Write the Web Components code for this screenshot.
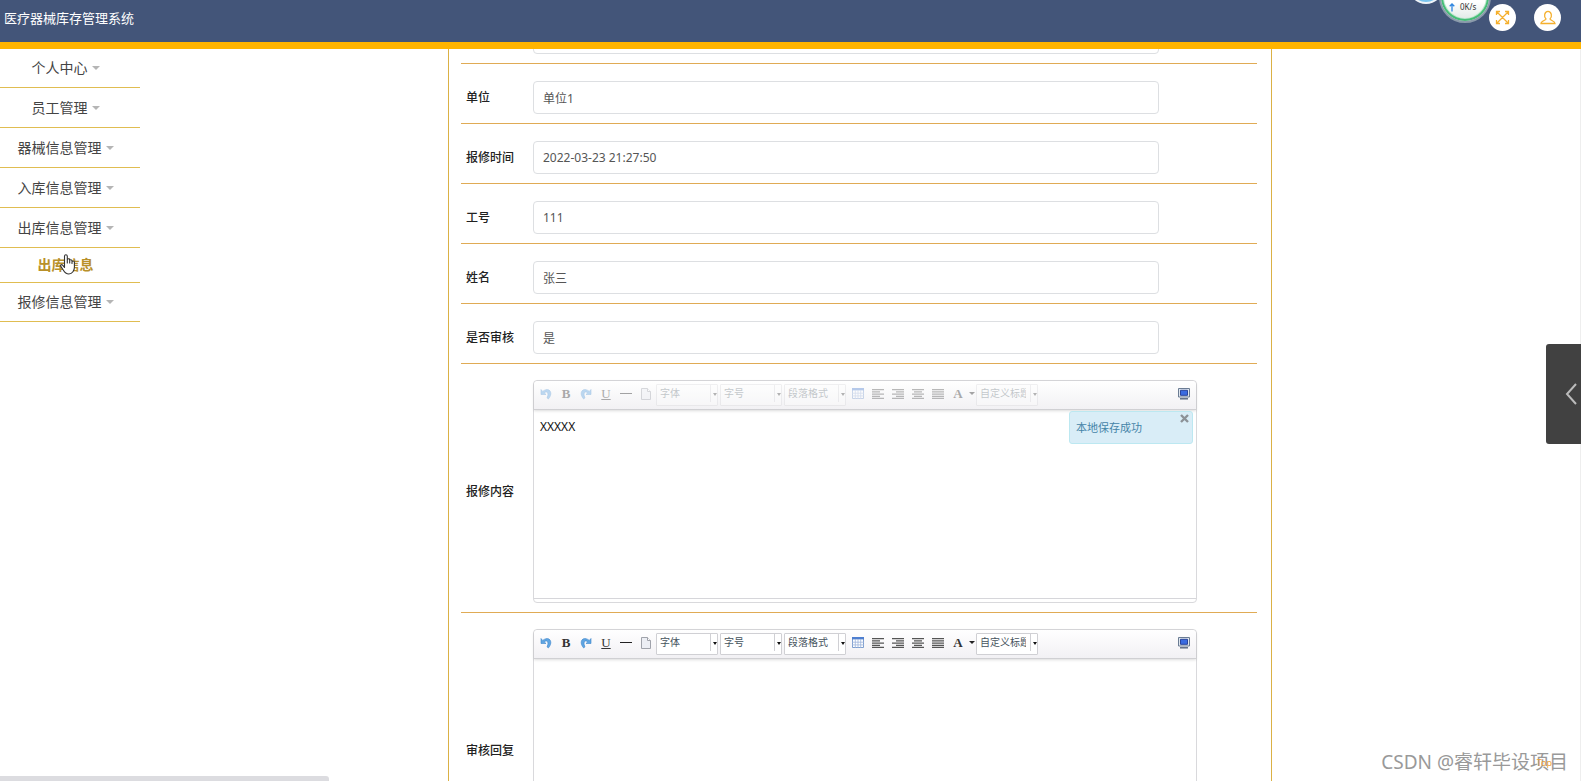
<!DOCTYPE html>
<html lang="zh-CN">
<head>
<meta charset="utf-8">
<title>医疗器械库存管理系统</title>
<style>
html, body { height: 100%; }
body { margin: 0; background: #fff; color: #333; font: 12px/18px "Noto Sans", "Noto Sans CJK SC", sans-serif; }
</style>
</head>
<body>
<inventory-app></inventory-app>
<script>
const define = (name, html, setup) => {
  const tpl = document.createElement('template');
  tpl.innerHTML = '<style>*{box-sizing:border-box}button{border:0;padding:0;background:none;font:inherit;color:inherit;cursor:pointer}</style>' + html;
  customElements.define(name, class extends HTMLElement {
    constructor() {
      super();
      this.attachShadow({ mode: 'open' }).append(tpl.content.cloneNode(true));
    }
    connectedCallback() { if (setup) setup(this, this.shadowRoot); }
  });
};

define('app-header', `
<style>
:host { display: flex; align-items: flex-start; justify-content: space-between; position: relative; height: 49px; flex: none;
  background: #435579; border-bottom: 7px solid #ffb400; overflow: hidden; color: #fff; }
h1 { margin: 0; padding-left: 4px; font-size: 13px; line-height: 36px; font-weight: 400; }
.actions { display: flex; gap: 18px; padding: 4px 20px 0 0; }
.actions button { width: 27px; height: 27px; border-radius: 50%; background: #fff; display: grid; place-items: center; }
svg { display: block; fill: none; stroke: #f5b02e; stroke-width: 1.3; }
.mini { position: absolute; right: 138px; top: -28px; width: 34px; height: 32px; border-radius: 50%; background: #79c4ee; border: 2px solid #eef3f8; }
.speed { position: absolute; right: 90px; top: -29px; width: 52px; height: 52px; border-radius: 50%; border: 2px solid #8b9bab;
  background: linear-gradient(#fff 60%, #dfe8e4); box-shadow: inset 0 0 0 2px #46bd77, inset 0 0 0 3px #b9e6ca; color: #333;
  font-size: 8px; line-height: 12px; padding: 28px 0 0 8px; display: flex; gap: 5px; align-items: flex-start; }
.speed svg { stroke: #2f86e0; margin-top: 2px; }
</style>
<h1>医疗器械库存管理系统</h1>
<div class="mini"></div>
<div class="speed"><svg width="6" height="9" viewBox="0 0 6 9"><path d="M3 8.500V1M.7 3.300 3 1l2.300 2.300"/></svg>0K/s</div>
<div class="actions">
<button aria-label="全屏"><svg width="15" height="15" viewBox="0 0 15 15"><path d="M1.500 5V1.500H5M10 1.500h3.500V5M13.500 10v3.500H10M5 13.500H1.500V10M2 2l11 11M13 2 2 13"/></svg></button>
<button aria-label="用户"><svg width="16" height="16" viewBox="0 0 16 16"><path d="M6 9C3.600 7 4.300 1.300 8 1.300S12.400 7 10 9c0 1.600 5 1.600 5 4.500H1C1 10.600 6 10.600 6 9Z"/></svg></button>
</div>`);

define('nav-item', `
<style>
:host { display: block; height: 40px; border-bottom: 1px solid #e0bd51; padding-right: 9px; font-size: 14px; color: #444; }
:host([sub]) { height: 35px; color: #b8902a; font-weight: 700; }
:host([last]) { height: 39px; }
a { display: flex; height: 100%; align-items: center; justify-content: center; gap: 4px; color: inherit; text-decoration: none; line-height: 20px; }
i { border: 4px solid transparent; border-top-color: #b5b5b5; border-bottom: 0; }
:host([sub]) i { display: none; }
</style>
<a href="#"><slot></slot><i></i></a>`);

define('side-nav', `
<style>
:host { display: block; width: 140px; flex: none; position: relative; }
nav-item:first-child { height: 39px; }
svg { position: absolute; left: 60px; top: 205px; }
</style>
<nav>
<nav-item>个人中心</nav-item>
<nav-item>员工管理</nav-item>
<nav-item>器械信息管理</nav-item>
<nav-item>入库信息管理</nav-item>
<nav-item>出库信息管理</nav-item>
<nav-item sub>出库信息</nav-item>
<nav-item last>报修信息管理</nav-item>
</nav>
<svg width="16" height="21" viewBox="0 0 16 21" fill="#fff" stroke="#333" stroke-width="1.100" stroke-linejoin="round"><path d="M4.500 13.500V2.300c0-2 2.800-2 2.800 0V9 5.800c0-1.400 2.400-1.400 2.400 0V9 6.700c0-1.400 2.300-1.300 2.300 0v2.800-1.600c0-1.300 2.400-1.200 2.400.2v5.200c0 3-2 6.700-5.500 6.700-3.200 0-4.400-1.700-5.500-3.700L.8 12.400c-.7-1.400.8-2.300 1.800-1.200Z"/></svg>`);

const rowStyle = `
:host { display: grid; grid-template-columns: 72px 1fr; align-items: center; border-bottom: 1px solid #e0ab55; }
label { padding-left: 5px; font-weight: 500; color: #222; }`;

define('text-field', `
<style>${rowStyle}
:host { padding: 17px 98px 9px 0; }
input { width: 100%; height: 33px; border: 1px solid #dddfe2; border-radius: 4px; padding: 0 9px; font: inherit; color: #555; background: #fff; outline: 0; }
</style>
<label for="value"></label><input id="value" type="text">`,
(host, root) => {
  root.querySelector('label').textContent = host.getAttribute('label') || '';
  const input = root.querySelector('input');
  input.value = host.getAttribute('value') || '';
  if (!host.hasAttribute('label')) input.setAttribute('aria-label', 'field');
});

define('tool-select', `
<style>
:host { display: block; width: 62px; height: 22px; margin-right: 2px; }
select { appearance: none; width: 100%; height: 100%; border: 1px solid #d0d0d4; border-radius: 1px; padding: 0 11px 4px 3px; margin: 0;
  font: 10px/16px "Noto Sans", "Noto Sans CJK SC", sans-serif; color: #45525c; display: block; overflow: hidden; text-overflow: clip;
  background: linear-gradient(#d0d0d4, #d0d0d4) right 6px top 0 / 1px 17px no-repeat, #fff; }
.box { position: relative; height: 100%; }
i { position: absolute; right: 1px; top: 9px; border: 2px solid transparent; border-top: 3px solid #111; border-bottom: 0; }
</style>
<div class="box"><select><option></option></select><i></i></div>`,
(host, root) => {
  root.querySelector('option').textContent = host.getAttribute('label');
  root.querySelector('select').setAttribute('aria-label', host.getAttribute('label'));
});

const lines = (rows) => `<svg width="12" height="10" viewBox="0 0 12 10" stroke="#555" stroke-width="1.300"><path d="${rows.map(([a, b], i) => `M${a} ${i * 2.2 + .7}H${b}`).join('')}"/></svg>`;

define('editor-toolbar', `
<style>
:host { display: flex; height: 29px; padding: 3px 2px 0; border-bottom: 1px solid #d0d0d3; border-radius: 4px 4px 0 0;
  background: linear-gradient(#fff, #f2f1f4); box-shadow: 0 1px 3px rgba(0,0,0,.14); position: relative; }
.tools { display: flex; flex: 1; }
:host([dim]) .tools > button { opacity: .4; }
:host([dim]) tool-select { opacity: .3; }
button { width: 20px; height: 19px; display: grid; place-items: center; color: #333; font: 700 13px/19px "Liberation Serif", serif; flex: none; }
.u { font-weight: 400; text-decoration: underline; }
.drop { width: 8px; }
.drop i { border: 3px solid transparent; border-top-color: #222; border-bottom: 0; }
svg { display: block; fill: none; }
</style>
<div class="tools">
<button aria-label="撤销"><svg width="12" height="12" viewBox="0 0 12 12"><path d="M1 1.500v5h5L4.300 4.900C6.800 2.500 9.500 5 7 9.800L8.300 11C13 6 10.500.7 6 1.700 4.700 2 3.700 2.600 2.700 3.400Z" fill="#5fa5e2" stroke="#3d84cb" stroke-width=".6"/></svg></button>
<button aria-label="加粗">B</button>
<button aria-label="重做"><svg width="12" height="12" viewBox="0 0 12 12"><path d="M11 1.500v5H6l1.700-1.600C5.200 2.500 2.500 5 5 9.800L3.700 11C-1 6 1.500.7 6 1.700c1.300.3 2.300.9 3.300 1.700Z" fill="#5fa5e2" stroke="#3d84cb" stroke-width=".6"/></svg></button>
<button class="u" aria-label="下划线">U</button>
<button aria-label="分隔线"><svg width="12" height="10" viewBox="0 0 12 10"><path d="M0 4.500h12" stroke="#222"/></svg></button>
<button aria-label="清空文档"><svg width="10" height="12" viewBox="0 0 10 12"><path d="M.5.500h6l3 3v8h-9Z" fill="#eceef4" stroke="#a0a3ab"/><path d="M6.500.500v3h3" fill="#fff" stroke="#a0a3ab"/></svg></button>
<tool-select label="字体"></tool-select>
<tool-select label="字号"></tool-select>
<tool-select label="段落格式"></tool-select>
<button aria-label="表格"><svg width="12" height="11" viewBox="0 0 12 11"><path d="M.5.500h11v10H.5Z" fill="#fff" stroke="#7f9fcf"/><path d="M0 1.200h12" stroke="#4e7fd0" stroke-width="2.400"/><path d="M3.300 2v9M6 2v9M8.700 2v9M0 5.200h12M0 7.900h12" stroke="#9db4da" stroke-width=".8"/></svg></button>
<button aria-label="居左">${lines([[0, 12], [0, 8], [0, 12], [0, 8], [0, 12]])}</button>
<button aria-label="居右">${lines([[0, 12], [4, 12], [0, 12], [4, 12], [0, 12]])}</button>
<button aria-label="居中">${lines([[0, 12], [2, 10], [0, 12], [2, 10], [0, 12]])}</button>
<button aria-label="两端对齐">${lines([[0, 12], [0, 12], [0, 12], [0, 12], [0, 12]])}</button>
<button aria-label="字体颜色">A</button>
<button class="drop" aria-label="选择颜色"><i></i></button>
<tool-select label="自定义标题"></tool-select>
</div>
<button aria-label="全屏"><svg width="12" height="12" viewBox="0 0 12 12"><path d="M.5.500h11v8.500H.5Z" fill="#dfe6ee" stroke="#6b7c93"/><path d="M2.500 2.300h7v5h-7Z" fill="#3a6be0" stroke="#28449c"/><path d="M2 10.800h8" stroke="#55657c" stroke-width="1.400"/></svg></button>`);

define('save-notice', `
<style>
:host { position: absolute; right: 3px; top: 30px; width: 124px; height: 33px; border: 1px solid #bce8f1; border-radius: 3px; background: #d9edf7;
  color: #4584a8; font-size: 11px; line-height: 31px; padding-left: 6px; box-sizing: border-box; }
button { position: absolute; right: 3px; top: 2px; width: 9px; height: 9px; }
svg { display: block; }
</style>
<slot></slot>
<button aria-label="关闭"><svg width="9" height="9" viewBox="0 0 9 9" stroke="#8c9297" stroke-width="2.400"><path d="m1 1 7 7M8 1 1 8"/></svg></button>`);

define('rich-editor', `
<style>${rowStyle}
:host { padding: 16px 60px 9px 0; }
.frame { position: relative; border: 1px solid #d9d9dc; border-radius: 4px; height: 223px; display: flex; flex-direction: column; }
:host([tall]) .frame { height: 243px; }
textarea { flex: 1; width: 100%; border: 0; outline: 0; resize: none; padding: 8px 6px; margin: 0; font: inherit; color: #111; background: transparent; display: block; }
.status { height: 4px; border-top: 1px solid #d6d6da; }
</style>
<label for="body"></label>
<div class="frame"><editor-toolbar></editor-toolbar><textarea id="body"></textarea><div class="status"></div><slot></slot></div>`,
(host, root) => {
  root.querySelector('label').textContent = host.getAttribute('label');
  root.querySelector('textarea').value = host.getAttribute('value') || '';
  root.querySelector('editor-toolbar').toggleAttribute('dim', host.hasAttribute('dim'));
});

/* The form is scrolled part of the way down inside its pane. */
define('repair-form', `
<style>
:host { display: block; flex: 1; min-width: 0; overflow: hidden; border-right: 1px solid #eee; }
form { max-width: 824px; margin: -45px auto 0; padding: 0 14px 0 12px; border: solid #dbb145; border-width: 0 1px; }
</style>
<form>
<text-field></text-field>
<text-field label="单位" value="单位1"></text-field>
<text-field label="报修时间" value="2022-03-23 21:27:50"></text-field>
<text-field label="工号" value="111"></text-field>
<text-field label="姓名" value="张三"></text-field>
<text-field label="是否审核" value="是"></text-field>
<rich-editor label="报修内容" value="XXXXX" dim><save-notice>本地保存成功</save-notice></rich-editor>
<rich-editor label="审核回复" tall></rich-editor>
</form>`);

define('inventory-app', `
<style>
:host { display: flex; flex-direction: column; height: 100vh; overflow: hidden; position: relative; }
.body { display: flex; flex: 1; min-height: 0; }
.drawer { position: absolute; right: 0; top: 344px; width: 35px; height: 100px; background: #414141; border-radius: 3px 0 0 3px; padding-left: 19px; }
.drawer svg { display: block; }
.scroll { position: absolute; left: 0; bottom: 0; width: 329px; height: 5px; background: #dcdce0; border-radius: 0 3px 0 0; }
.mark { position: absolute; right: 13px; bottom: 5px; font-size: 19px; line-height: 28px; color: #999; white-space: nowrap; }
.top { position: absolute; right: 29px; bottom: 11px; font-size: 9px; line-height: 14px; color: #eda23a; text-decoration: none; }
</style>
<app-header></app-header>
<div class="body"><side-nav></side-nav><repair-form></repair-form></div>
<button class="drawer" aria-label="展开"><svg width="12" height="22" viewBox="0 0 12 22" fill="none" stroke="#bbb" stroke-width="2"><path d="M11 1 2 11l9 10"/></svg></button>
<div class="scroll"></div>
<div class="mark">CSDN @睿轩毕设项目</div>
<a class="top" href="#">Top</a>`);
</script>
</body>
</html>
